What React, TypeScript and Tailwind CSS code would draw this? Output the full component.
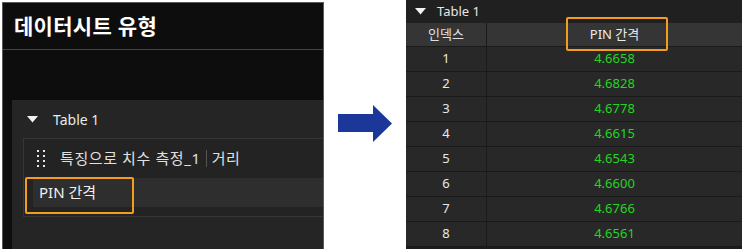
import React from "react";

const rows = [
  ["1", "4.6658"],
  ["2", "4.6828"],
  ["3", "4.6778"],
  ["4", "4.6615"],
  ["5", "4.6543"],
  ["6", "4.6600"],
  ["7", "4.6766"],
  ["8", "4.6561"],
];

const font = { fontFamily: '"Noto Sans", "Noto Sans CJK KR", sans-serif' };

function Tri() {
  return (
    <svg width="11" height="7" viewBox="0 0 11 7">
      <polygon points="0,0 11,0 5.5,6.5" fill="#f2f2f2" />
    </svg>
  );
}

function Handle() {
  const dots = [];
  for (let r = 0; r < 4; r++) {
    for (let c = 0; c < 2; c++) {
      dots.push(<rect key={`${r}-${c}`} x={c * 6} y={r * 5} width="2" height="2" fill="#e8e8e8" />);
    }
  }
  return (
    <svg width="8" height="17" viewBox="0 0 8 17">
      {dots}
    </svg>
  );
}

export default function App() {
  return (
    <div className="w-[742px] h-[249px] bg-white flex overflow-hidden" style={font}>
      {/* Left panel */}
      <div className="mt-[2px] ml-[2px] w-[322px] h-[247px] bg-[#0d0d0d] border-t border-r border-l border-[#5a5a5a] flex flex-col">
        <div className="h-[47px] border-b border-[#444] flex items-center pl-[11px]">
          <span className="text-[21px] font-bold text-white leading-none tracking-[0.3px]">데이터시트 유형</span>
        </div>
        <div className="h-[50px]" />
        <div className="ml-[9px] flex-1 bg-[#252525] flex flex-col">
          <div className="h-[38px] flex items-center pl-[15px] gap-[15px]">
            <Tri />
            <span className="text-[14px] text-[#eaeaea]">Table 1</span>
          </div>
          <div className="ml-[11px] h-[79px] border-t border-l border-b border-[#363636] bg-[#232323] flex flex-col">
            <div className="h-[39px] flex items-center pl-[13px]">
              <Handle />
              <span className="ml-[15px] text-[15px] tracking-[0.6px] text-[#e0e0e0]">특징으로 치수 측정_1</span>
              <span className="mx-[5px] w-px h-[17px] bg-[#555]" />
              <span className="text-[15px] tracking-[0.6px] text-[#e0e0e0]">거리</span>
            </div>
            <div className="relative ml-[9px] h-[29px] bg-[#2e2e2e] flex items-center pl-[6px]">
              <span className="text-[15px] text-[#f0f0f0]">PIN 간격</span>
              <div className="absolute left-[-8px] top-[-1px] w-[109px] h-[37px] border-2 border-[#f39c1f] rounded-[2px]" />
            </div>
          </div>
        </div>
      </div>

      {/* Arrow */}
      <div className="w-[82px] flex items-start pt-[105px] pl-[14px]">
        <svg width="55" height="38" viewBox="0 0 55 38">
          <polygon points="0,9 35,9 35,0 54,18.5 35,37 35,27 0,27" fill="#1b3799" />
        </svg>
      </div>

      {/* Right panel */}
      <div className="w-[336px] h-[249px] bg-[#1c1c1c] flex flex-col relative">
        <div className="h-[23px] bg-[#202020] flex items-center pl-[9px] gap-[11px]">
          <Tri />
          <span className="text-[13px] text-[#e6e6e6]">Table 1</span>
        </div>
        <div className="h-[24px] bg-[#353535] flex border-b border-[#1a1a1a]">
          <div className="w-[81px] flex items-center justify-center border-r border-[#1a1a1a] text-[13px] text-[#e0e0e0]">인덱스</div>
          <div className="flex-1 flex items-center justify-center text-[13px] text-[#ececec]">PIN 간격</div>
        </div>
        {rows.map(([i, v]) => (
          <div key={i} className="h-[25px] bg-[#282828] flex border-b border-[#1a1a1a]">
            <div className="w-[81px] flex items-center justify-center border-r border-[#1a1a1a] text-[13px] text-[#e8e8e8]">{i}</div>
            <div className="flex-1 flex items-center justify-center text-[13px] text-[#22d622]">{v}</div>
          </div>
        ))}
        <div className="absolute left-[160px] top-[17px] w-[102px] h-[34px] border-2 border-[#f39c1f] rounded-[2px]" />
      </div>
    </div>
  );
}
